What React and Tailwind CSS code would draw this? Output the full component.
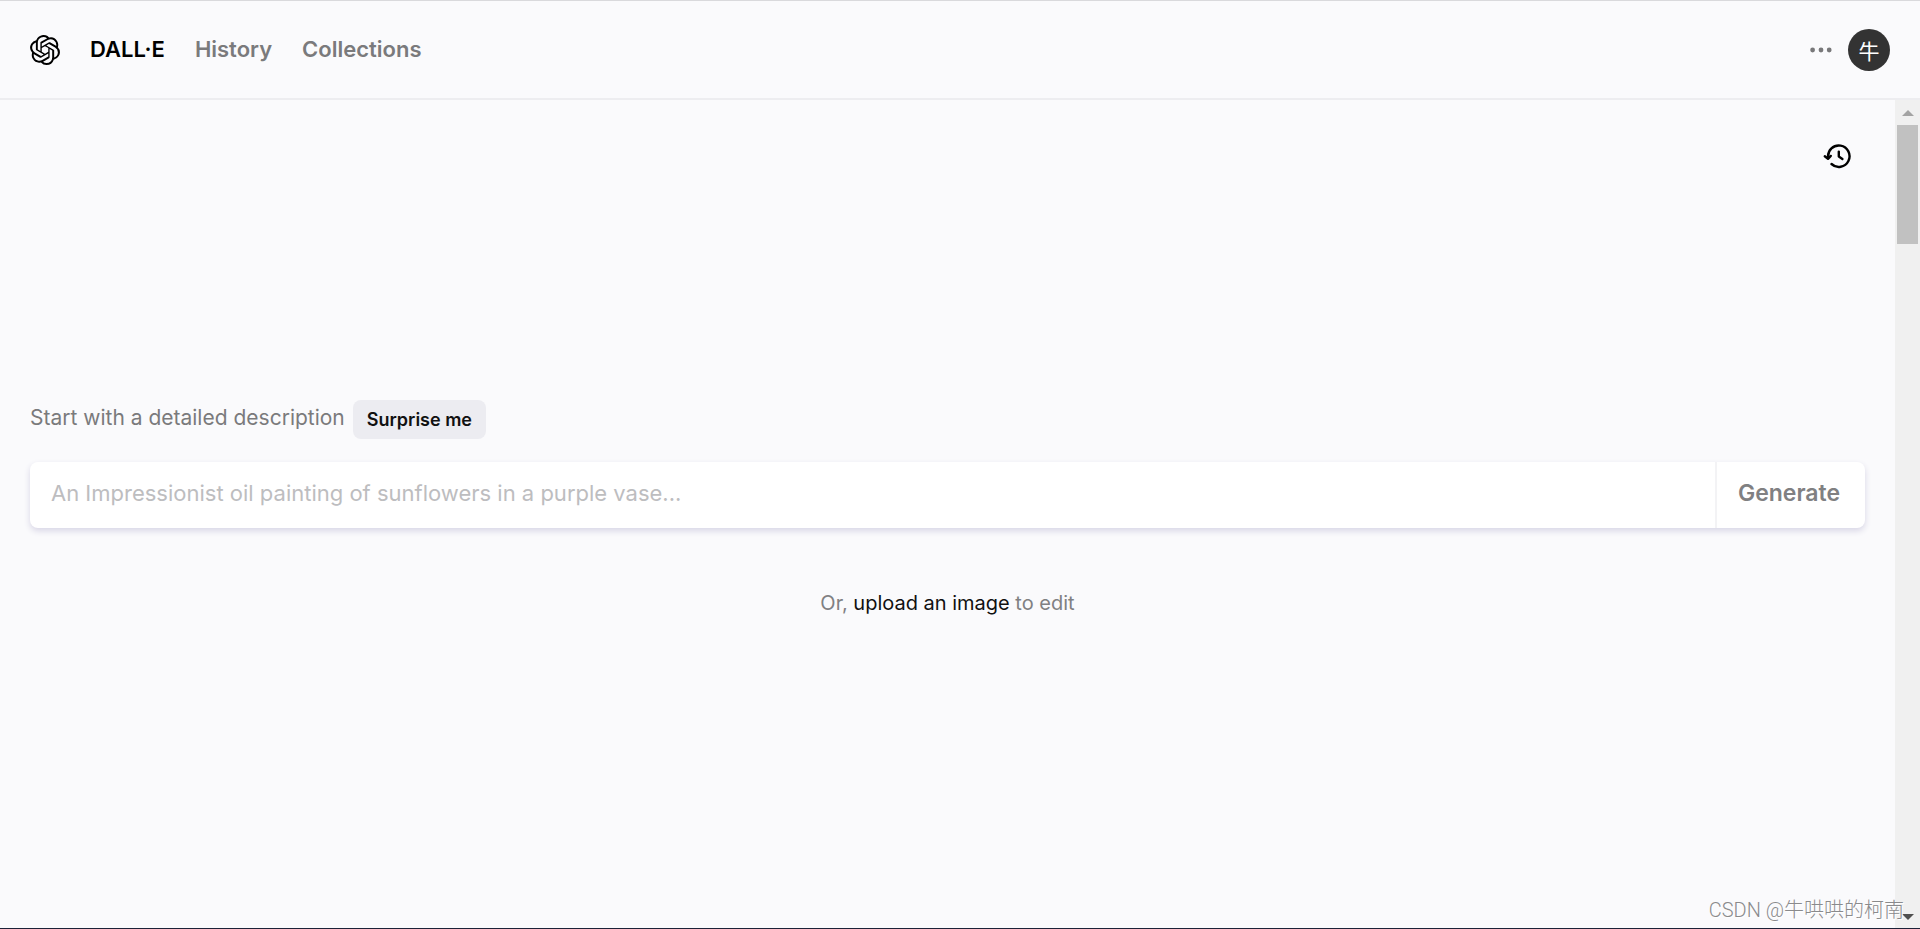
import React, { useState } from 'react';
import { SiOpenai } from 'react-icons/si';

const links = [
  { name: 'DALL·E', href: '#dalle', active: true },
  { name: 'History', href: '#history', active: false },
  { name: 'Collections', href: '#collections', active: false }
];

const HistoryIcon = () => (
  <svg width="28" height="28" viewBox="0 0 28 28" fill="none" stroke="currentColor" strokeWidth="2.4" strokeLinecap="round" strokeLinejoin="round">
    <path d="M5.2 15.5A10.7 10.7 0 1 1 8.5 22" />
    <path d="M1.8 14.2l3.2 2.6 2.8-2.9" />
    <path d="M15.8 9.6v5l3.6 2.4" />
  </svg>
);

const Header = () => (
  <header className="flex items-center justify-between px-[30px] h-[100px] shrink-0 border-t border-t-[#d9d9dc] border-b-2 border-b-[#ededf0]">
    <nav className="flex items-center gap-[30px] text-[22px] font-semibold">
      <a href="#home" aria-label="OpenAI" className="text-black">
        <SiOpenai className="w-[30px] h-[30px]" />
      </a>
      {links.map(l => (
        <a key={l.name} href={l.href} className={l.active ? 'text-black' : 'text-[#7a7a7c]'}>
          {l.name}
        </a>
      ))}
    </nav>
    <div className="flex items-center gap-4">
      <button type="button" aria-label="More" className="text-[#78787a]">
        <svg width="22" height="6" viewBox="0 0 22 6" fill="currentColor">
          <circle cx="2.6" cy="3" r="2.4" />
          <circle cx="11" cy="3" r="2.4" />
          <circle cx="19.2" cy="3" r="2.4" />
        </svg>
      </button>
      <button type="button" className="w-[42px] h-[42px] rounded-full bg-[#333] text-white text-[21px] leading-5 font-['Noto_Sans_CJK_SC',sans-serif]">
        牛
      </button>
    </div>
  </header>
);

const Scrollbar = () => (
  <div className="w-[25px] shrink-0 bg-[#f0f0f0] flex flex-col items-center justify-between" aria-hidden="true">
    <div className="w-[21px] flex flex-col items-center">
      <svg width="12" height="25" viewBox="0 0 12 25" fill="#a3a3a3">
        <path d="M6 10l6 6H0z" />
      </svg>
      <div className="w-full h-[119px] bg-[#c1c1c1]" />
    </div>
    <svg width="12" height="25" viewBox="0 0 12 25" fill="#505050">
      <path d="M6 17l6-6H0z" />
    </svg>
  </div>
);

const App = () => {
  const [prompt, setPrompt] = useState('');

  const handleSubmit = e => {
    e.preventDefault();
  };

  return (
    <div className="relative h-screen flex flex-col bg-[#fafafc] font-[Inter,sans-serif]">
      <Header />
      <div className="flex flex-1 min-h-0">
        <main className="flex-1 flex flex-col px-[30px]">
          <div className="flex justify-end pt-[42px] px-[14px]">
            <button type="button" aria-label="Show history" className="text-black">
              <HistoryIcon />
            </button>
          </div>

          <form onSubmit={handleSubmit} className="mt-[230px]">
            <div className="flex items-center gap-2">
              <label htmlFor="prompt" className="pb-1 text-[21px] leading-7 text-[#7a7a7c]">
                Start with a detailed description
              </label>
              <button type="button" className="h-[39px] px-[14px] rounded-lg bg-[#ececf1] text-[18px] font-semibold text-[#111]">
                Surprise me
              </button>
            </div>
            <div className="mt-[23px] h-[66px] flex rounded-lg bg-white shadow-[0_3px_6px_#d8d6e6]">
              <input
                id="prompt"
                value={prompt}
                onChange={e => setPrompt(e.target.value)}
                placeholder="An Impressionist oil painting of sunflowers in a purple vase..."
                className="flex-1 min-w-0 px-[21px] pb-1 text-[22px] outline-none placeholder:text-[#bdbdbf]"
              />
              <button type="submit" className="w-[150px] pr-1 pb-[3px] border-l-2 border-[#f3f3f5] text-[23px] font-semibold text-[#808082]">
                Generate
              </button>
            </div>
          </form>

          <p className="mt-[60px] text-center text-[20px] text-[#808082]">
            Or, <a href="#upload" className="text-[#111]">upload an image</a> to edit
          </p>
        </main>
        <Scrollbar />
      </div>
      <div className="h-px shrink-0 bg-[#1c2238]" />
      <p className="absolute right-4 bottom-1 text-[20px] leading-[30px] text-[#8a8a8c] font-light font-[Roboto,'Noto_Sans_CJK_SC',sans-serif] [text-shadow:1px_1px_0_#ffffff]">
        CSDN @牛哄哄的柯南
      </p>
    </div>
  );
};

export default App;
